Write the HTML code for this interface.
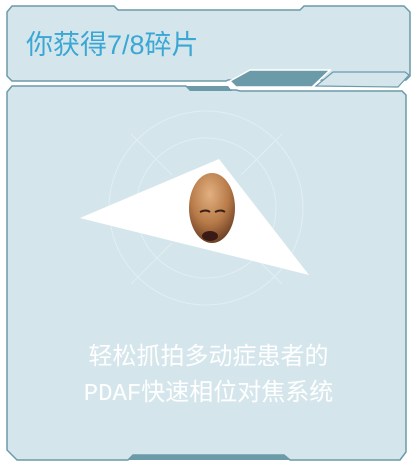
<!DOCTYPE html><html><head><style>
body{margin:0;width:417px;height:467px;background:#fff;overflow:hidden;position:relative;font-family:"Liberation Sans","Noto Sans CJK SC",sans-serif}
.t{position:absolute;color:#3aa7d4;font-size:27px;left:26px;top:28px;line-height:34px}
.b{position:absolute;left:0;width:417px;text-align:center;color:#fff;font-size:24px;line-height:36px;top:341px;font-family:"Liberation Mono","Noto Sans CJK SC",sans-serif}
</style></head><body>
<svg width="417" height="467" style="position:absolute;left:0;top:0">
<defs><radialGradient id="sk" cx="45%" cy="30%" r="70%"><stop offset="0" stop-color="#e2b080"/><stop offset="0.6" stop-color="#b77a48"/><stop offset="1" stop-color="#6e4226"/></radialGradient></defs>
<path d="M12,6 H114 L118,10 H300 L304,6 H404 L410,12 V76 L406,80 H228 L226,81 H12 L7,76 V12 Z" fill="#d4e6ec" stroke="#6b9aa8" stroke-width="1.5"/>
<path d="M230,81 L250,70 H330 L312,87 H236 Z" fill="#6b9aa8" stroke="#fff" stroke-width="1.5"/>
<path d="M316,86 L333,72 H405 L409,75 L398,87 Z" fill="#d4e6ec" stroke="#6b9aa8" stroke-width="1.2"/>
<path d="M12,86 H186 L190,90 H236 L240,91 H402 L406,95 V452 L400,460 H290 L284,455 H133 L128,460 H17 L7,450 V92 Z" fill="#d4e6ec" stroke="#6b9aa8" stroke-width="1.5"/>
<path d="M186,86 L190,91 H232 L228,86 Z" fill="#6b9aa8"/>
<path d="M128,460 L133,455 H284 L290,460 Z" fill="#6b9aa8"/>
<g stroke="#e2eef2" fill="none" stroke-width="1">
<circle cx="206" cy="208" r="97"/><circle cx="206" cy="208" r="70"/>
<line x1="131" y1="134" x2="172" y2="175"/><line x1="282" y1="134" x2="241" y2="175"/>
<line x1="131" y1="284" x2="172" y2="243"/><line x1="282" y1="284" x2="241" y2="243"/>
</g>
<polygon points="80,218 219,159 309,275" fill="#fff"/>
<ellipse cx="212" cy="208" rx="23" ry="35" fill="url(#sk)"/>
<ellipse cx="210" cy="236" rx="8" ry="5" fill="#3a1a14"/>
<path d="M200,212 q6,-3 10,0 M215,212 q6,-3 10,0" stroke="#3a2014" stroke-width="2" fill="none"/>
</svg>
<div class="t">你获得7/8碎片</div>
<div class="b">轻松抓拍多动症患者的<br>PDAF快速相位对焦系统</div>
</body></html>
